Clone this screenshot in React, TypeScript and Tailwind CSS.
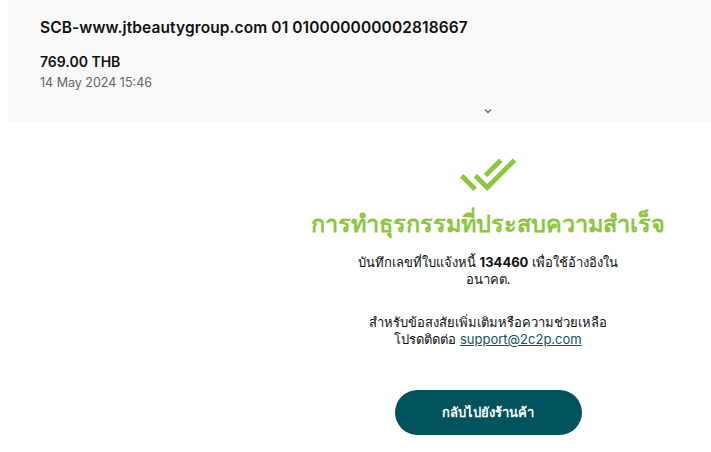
import React from "react";

export default function App() {
  return (
    <div className="w-[711px] h-[452px] overflow-hidden bg-white">
      <div className="ml-2 w-[960px] font-['Inter','Noto_Sans',sans-serif]">
        <div className="bg-[#f9f9f9] h-[123px] pl-8 pt-[18px] relative">
          <div className="text-[15.5px] font-semibold text-[#111] leading-5 tracking-[0.1px]">
            SCB-www.jtbeautygroup.com 01 010000000002818667
          </div>
          <div className="mt-[14px] text-[14px] font-semibold text-[#111] leading-5">
            769.00 THB
          </div>
          <div className="mt-[1px] text-[12.5px] text-[#666] leading-5">
            14 May 2024 15:46
          </div>
          <div className="absolute left-[474px] top-[105px] text-[#666]">
            <svg width="12" height="12" viewBox="0 0 24 24" fill="none" stroke="currentColor" strokeWidth="2.5">
              <path d="M6 9l6 6 6-6" />
            </svg>
          </div>
        </div>
        <div className="flex flex-col items-center">
          <svg width="58" height="58" viewBox="0 0 24 24" className="mt-[22px] text-[#8dc63f]" fill="currentColor">
            <path d="M18 7l-1.41-1.41-6.34 6.34 1.41 1.41L18 7zm4.24-1.41L11.66 16.17 7.48 12l-1.41 1.41L11.66 19l12-12-1.42-1.41zM.41 13.41L6 19l1.41-1.41L1.83 12 .41 13.41z" />
          </svg>
          <div className="mt-[5px] text-[23.5px] font-bold text-[#8dc63f] leading-8">
            การทำธุรกรรมที่ประสบความสำเร็จ
          </div>
          <p className="mt-[14px] w-[300px] text-center text-[13px] text-[#111] leading-[17px]">
            บันทึกเลขที่ใบแจ้งหนี้ <span className="font-bold">134460</span> เพื่อใช้อ้างอิงใน อนาคต.
          </p>
          <p className="mt-[26px] w-[300px] text-center text-[13px] text-[#111] leading-[17px]">
            สำหรับข้อสงสัยเพิ่มเติมหรือความช่วยเหลือ
            <br />
            โปรดติดต่อ <a className="underline text-[#0f5560]">support@2c2p.com</a>
          </p>
          <button className="mt-[42px] w-[187px] h-[45px] rounded-full bg-[#00525c] text-white text-[13px] font-semibold">
            กลับไปยังร้านค้า
          </button>
        </div>
      </div>
    </div>
  );
}
